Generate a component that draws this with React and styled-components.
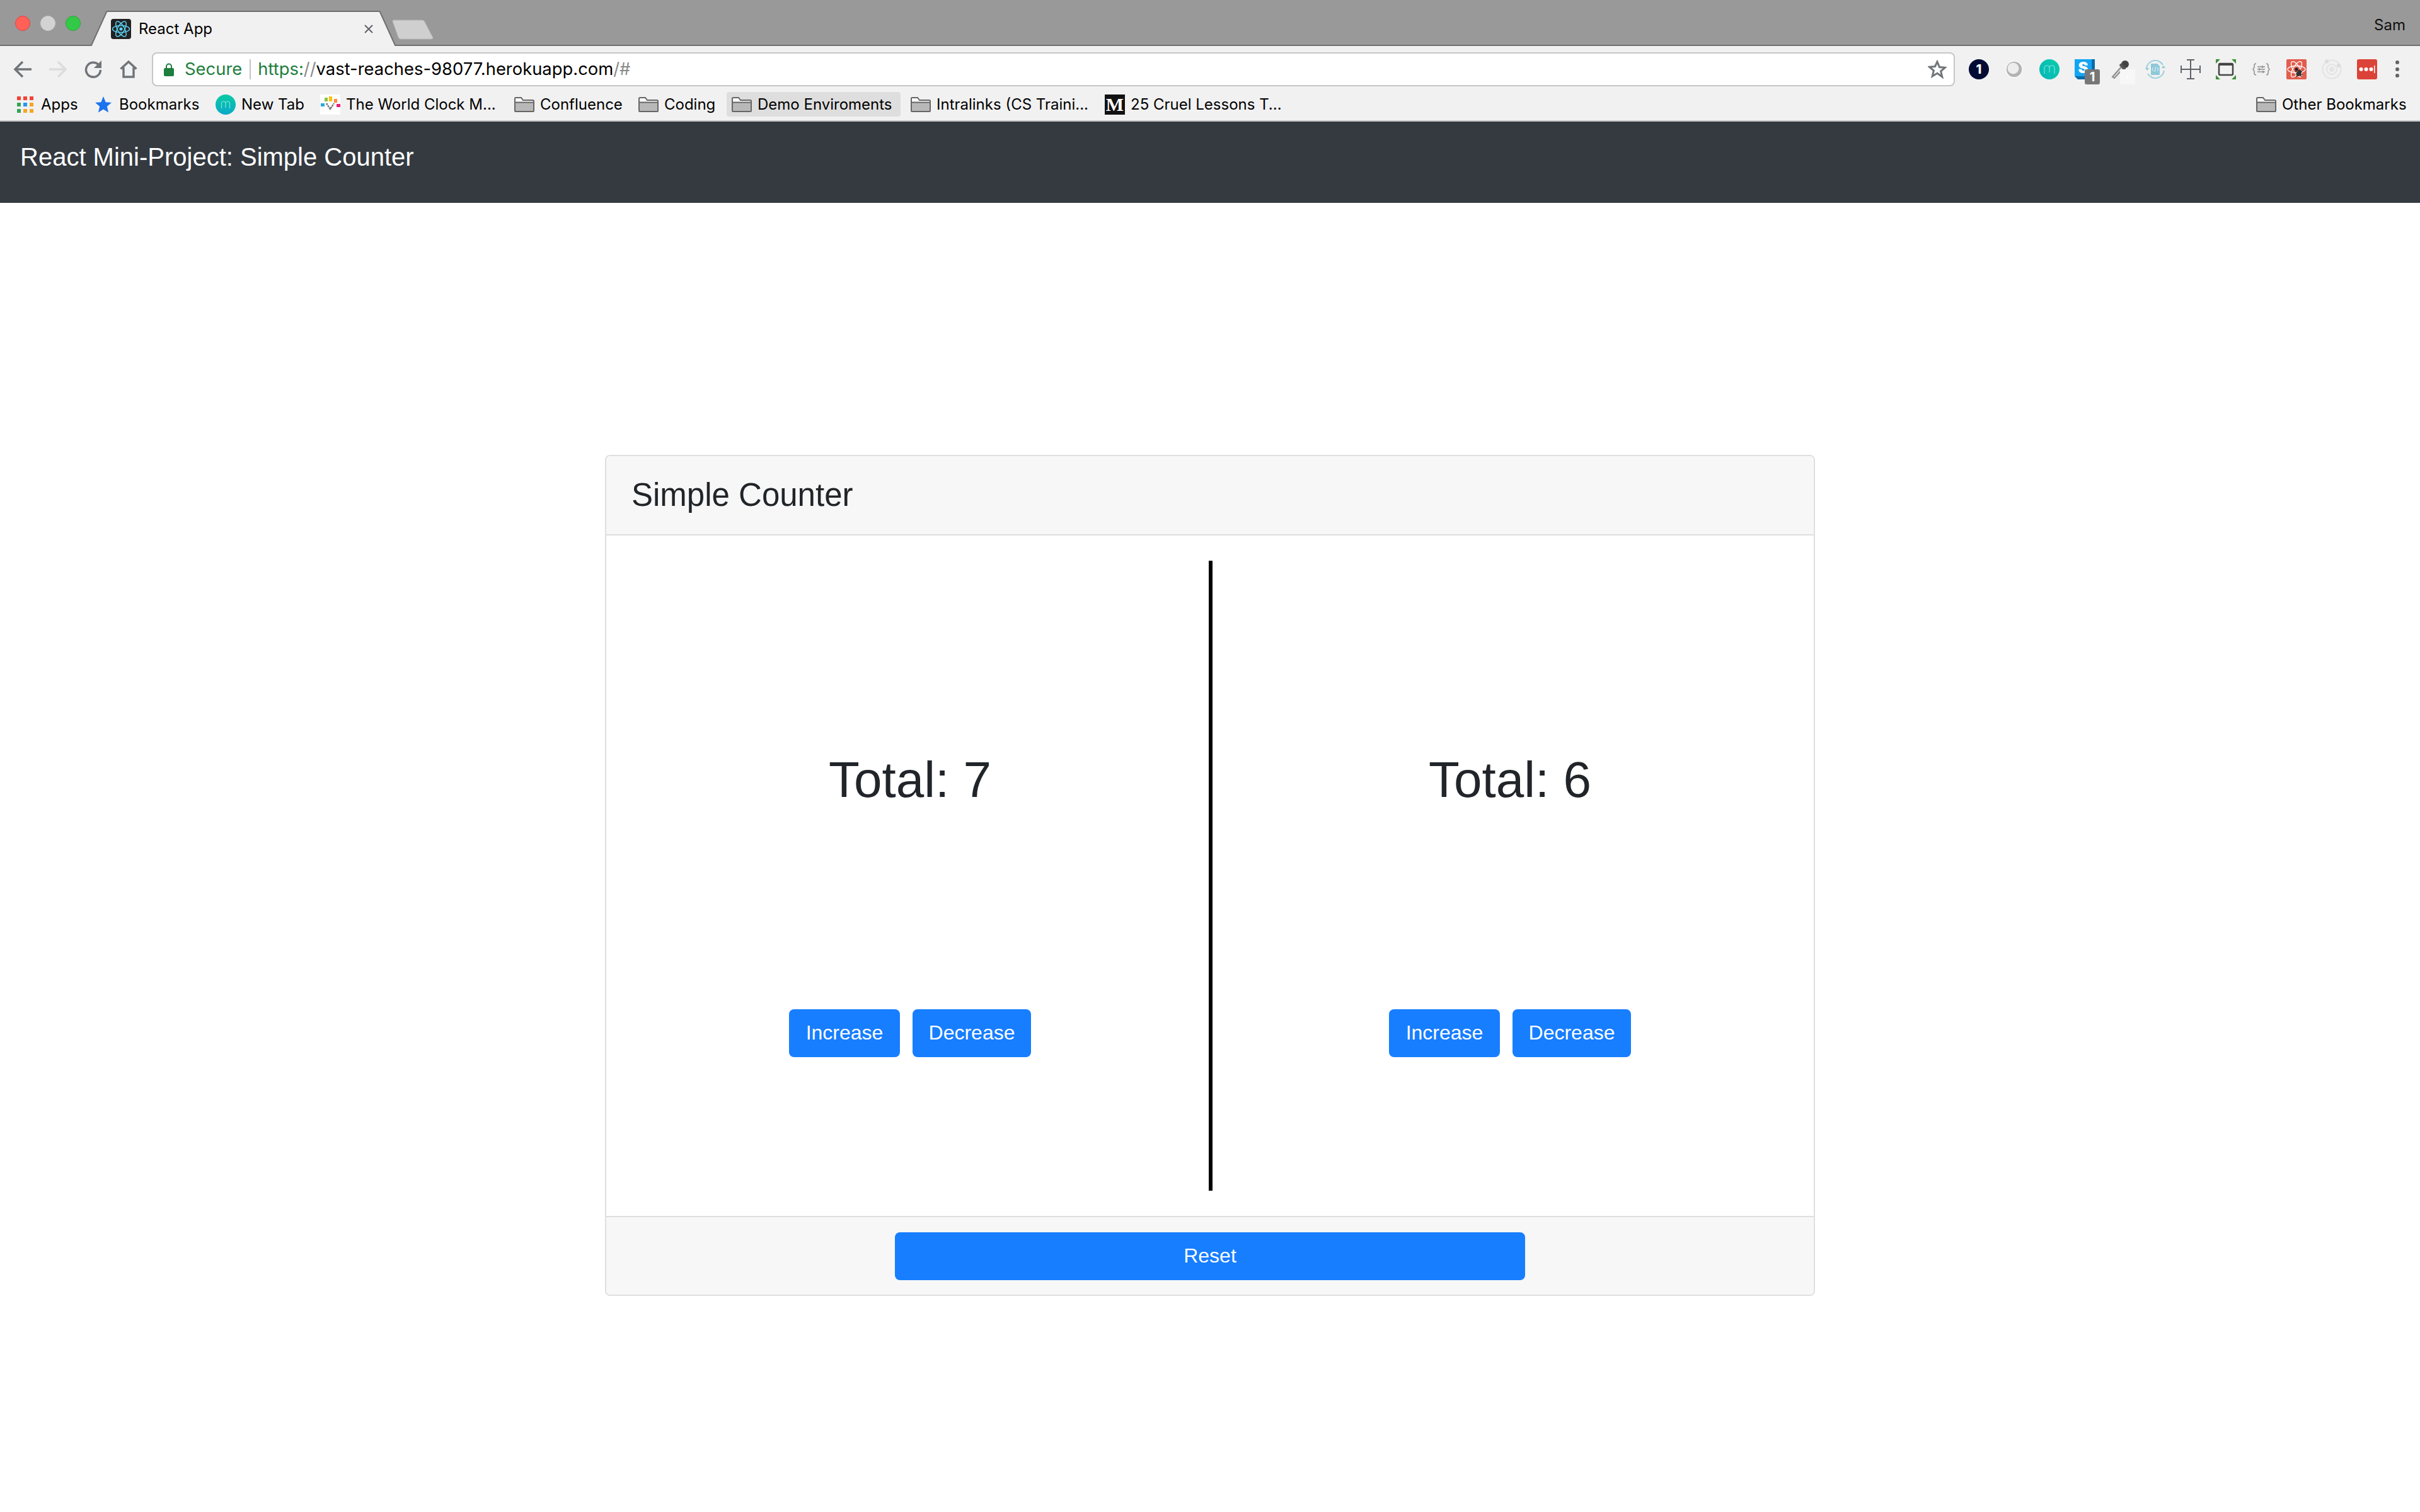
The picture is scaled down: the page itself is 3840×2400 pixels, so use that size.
import React from "react";
import styled, { createGlobalStyle } from "styled-components";

const GlobalStyle = createGlobalStyle`
  html, body {
    margin: 0;
    background: #fff;
  }
  * {
    box-sizing: border-box;
  }
`;

const chromeFont = `Inter, "Liberation Sans", sans-serif`;
const pageFont = `"Liberation Sans", Arial, sans-serif`;

const Page = styled.div`
  width: 3840px;
  height: 2400px;
  overflow: hidden;
  display: flex;
  flex-direction: column;
  background: #fff;
`;

/* ---- browser chrome ---- */

const TabStrip = styled.div`
  height: 73px;
  flex: none;
  display: flex;
  align-items: flex-end;
  padding-left: 24px;
  background: #999;
  border-bottom: 2px solid #6f6f6f;
`;

const Lights = styled.div`
  align-self: flex-start;
  margin-top: 25px;
  display: flex;
  gap: 16px;
`;

const Light = styled.span`
  width: 24px;
  height: 24px;
  border-radius: 50%;
  background: ${(p) => p.$color};
  border: 1px solid ${(p) => p.$edge};
`;

const Tab = styled.div`
  position: relative;
  width: 484px;
  height: 56px;
  margin-left: 16px;
  margin-bottom: -2px;
  padding: 13px 0 0 32px;
  display: flex;
  align-items: flex-start;
`;

const TabShape = styled.svg`
  position: absolute;
  left: 0;
  top: 0;
`;

const TabIcon = styled.svg`
  position: relative;
  flex: none;
  width: 32px;
  height: 32px;
`;

const TabTitle = styled.span`
  position: relative;
  margin-left: 12px;
  font: 400 24px/32px ${chromeFont};
  color: #000;
`;

const TabClose = styled.svg`
  position: absolute;
  left: 434px;
  top: 22px;
`;

const NewTab = styled.svg`
  flex: none;
  margin-left: -6px;
  margin-bottom: 8px;
`;

const Profile = styled.span`
  margin-left: auto;
  align-self: flex-start;
  margin-top: 24px;
  padding-right: 23px;
  font: 400 24px/32px ${chromeFont};
  color: #111;
`;

const Toolbar = styled.div`
  height: 64px;
  flex: none;
  display: flex;
  align-items: flex-start;
  padding: 10px 0 0 8px;
  background: #f1f1f1;
`;

const NavButton = styled.div`
  width: 56px;
  height: 54px;
  display: flex;
  align-items: center;
  justify-content: center;
`;

const AddressBar = styled.div`
  flex: none;
  width: 2861px;
  height: 54px;
  margin-left: 9px;
  padding: 0 11px 0 17px;
  display: flex;
  align-items: center;
  background: #fff;
  border: 2px solid #c6c6c6;
  border-radius: 8px;
`;

const Secure = styled.span`
  margin-left: 17px;
  font: 400 27.4px/1 ${chromeFont};
  color: #1e7e3e;
`;

const AddressDivider = styled.span`
  width: 2px;
  height: 32px;
  margin: 0 11px 0 12px;
  background: #c4c4c4;
`;

const Url = styled.span`
  font: 400 27.4px/1 ${chromeFont};
  color: #000;
`;

const UrlPart = styled.span`
  color: ${(p) => p.$color};
`;

const StarButton = styled.svg`
  margin-left: auto;
`;

const Extensions = styled.div`
  margin-left: 22px;
  height: 54px;
  display: flex;
  align-items: center;
  gap: 24px;
`;

const Extension = styled.div`
  position: relative;
  width: 32px;
  height: 32px;
  flex: none;
`;

const TileLetter = styled.span`
  position: absolute;
  left: 0;
  top: 0;
  width: 27px;
  height: 27px;
  color: #fff;
  text-align: center;
  font: 900 24px/27px ${chromeFont};
`;

const Badge = styled.span`
  position: absolute;
  left: 16px;
  top: 16px;
  width: 24px;
  height: 24px;
  border-radius: 3px;
  background: ${(p) => (p.$faded ? "#f7f7f7" : "#777")};
  color: #fff;
  font: 700 20px/24px ${chromeFont};
  text-align: center;
`;

const MenuDots = styled.svg`
  flex: none;
  margin-left: 5px;
`;

const BookmarksBar = styled.div`
  height: 56px;
  flex: none;
  display: flex;
  align-items: flex-start;
  gap: 8px;
  padding: 9px 8px 0 19px;
  background: #f1f1f1;
  border-bottom: 2px solid #c4c4c4;
`;

const Bookmark = styled.div`
  height: 39px;
  display: flex;
  align-items: center;
  gap: 9px;
  padding: 0 10px 0 8px;
  border-radius: 4px;
  background: ${(p) => (p.$active ? "#dedede" : "transparent")};
  ${(p) => p.$end && "margin-left: auto;"}
`;

const BookmarkLabel = styled.span`
  display: block;
  width: ${(p) => p.$w}px;
  white-space: nowrap;
  font: 400 24px/39px ${chromeFont};
  color: #000;
`;

const SmallBookmarkIcon = styled.svg`
  flex: none;
  margin-right: 3px;
`;

const MediumMark = styled.span`
  width: 32px;
  height: 32px;
  flex: none;
  background: #111;
  color: #fff;
  text-align: center;
  font: 700 30px/32px "Liberation Serif", serif;
`;

/* ---- page ---- */

const Navbar = styled.nav`
  height: 129px;
  flex: none;
  padding: 26px 32px;
  background: #343a40;
`;

const Brand = styled.div`
  font: 400 40px/60px ${pageFont};
  color: #fff;
`;

const Card = styled.section`
  width: 1920px;
  margin: 400px auto 0;
  border: 2px solid #dfdfdf;
  border-radius: 8px;
  overflow: hidden;
`;

const CardHeader = styled.header`
  height: 126px;
  padding: 26px 40px 22px;
  background: #f7f7f7;
  border-bottom: 2px solid #dfdfdf;
  font: 400 51px/72px ${pageFont};
  color: #212529;
`;

const CardBody = styled.div`
  padding: 40px 9px;
  display: flex;
  justify-content: center;
`;

const Counter = styled.div`
  width: 946px;
  height: 1000px;
  display: flex;
  flex-direction: column;
  align-items: center;
`;

const Total = styled.h2`
  margin: 300px 0 316px;
  font: 400 80px/96px ${pageFont};
  color: #212529;
`;

const Divider = styled.div`
  width: 6px;
  height: 1000px;
  flex: none;
  margin: 0 -1px 0 1px;
  background: #000;
`;

const ButtonRow = styled.div`
  display: flex;
  gap: 20px;
`;

const Button = styled.button`
  width: ${(p) => p.$w}px;
  height: 76px;
  padding: 0 0 2px;
  border: 0;
  border-radius: 8px;
  background: #177eff;
  color: #fff;
  font: 400 32px/48px ${pageFont};
`;

const CardFooter = styled.footer`
  height: 125px;
  padding-top: 24px;
  display: flex;
  justify-content: center;
  align-items: flex-start;
  background: #f7f7f7;
  border-top: 2px solid #dfdfdf;
`;

/* ---- drawings ---- */

const Folder = () => (
  <svg width="32" height="24" viewBox="0 0 32 24" style={{ flex: "none" }}>
    <path d="M1 22V2.5Q1 1 2.5 1H11l3 4h15.5Q31 5 31 6.5V22q0 1-1 1H2q-1 0-1-1z" fill="#fafafa" stroke="#666" strokeWidth="2" />
    <path d="M2 9h28v13H2z" fill="#b8b8b8" />
    <path d="M1 8.500h30" stroke="#666" strokeWidth="2" />
  </svg>
);

const AppsIcon = () => {
  const colors = ["#f44336", "#f44336", "#f44336", "#34a35c", "#2196f3", "#f5a623", "#34a35c", "#f5a623", "#f5a623"];
  return (
    <SmallBookmarkIcon width="26" height="26" viewBox="0 0 26 26">
      {colors.map((c, i) => (
        <rect key={i} x={(i % 3) * 10} y={Math.floor(i / 3) * 10} width="6" height="6" fill={c} />
      ))}
    </SmallBookmarkIcon>
  );
};

const BlueStar = () => (
  <SmallBookmarkIcon width="26" height="26" viewBox="0 0 26 26">
    <path d="M13 0l3.700 9.200 9.300.6-7.200 6.200 2.300 9.500L13 20.400l-8.100 5.100 2.300-9.500L0 9.800l9.300-.6z" fill="#1c73ee" />
  </SmallBookmarkIcon>
);

const MeldCircle = ({ id }) => (
  <svg width="32" height="32" viewBox="0 0 32 32" style={{ flex: "none" }}>
    <defs>
      <linearGradient id={id} x1="0" y1="0" x2="0" y2="1">
        <stop offset="0" stopColor="#08cba3" />
        <stop offset="1" stopColor="#0aa9c8" />
      </linearGradient>
    </defs>
    <circle cx="16" cy="16" r="16" fill={`url(#${id})`} />
    <path d="M9.500 22v-8q0-3 3.200-3t3.300 3v7M16 14q0-3 3.200-3t3.300 3v8" fill="none" stroke="#7fe3dc" strokeWidth="1.200" />
  </svg>
);

const WorldClockIcon = () => (
  <svg width="32" height="32" viewBox="0 0 32 32" style={{ flex: "none" }}>
    <rect width="32" height="32" fill="#fff" />
    <rect x="7" y="5" width="5" height="6" fill="#8bc34a" />
    <rect x="14" y="3" width="5" height="8" fill="#ffc107" />
    <rect x="22" y="7" width="5" height="6" fill="#ff8a3d" />
    <rect x="1" y="14" width="6" height="5" fill="#29a9e0" />
    <rect x="26" y="15" width="6" height="5" fill="#e91e78" />
    <path d="M10 14l6 9 6-9" fill="none" stroke="#777" strokeWidth="2.500" strokeDasharray="3 1" />
  </svg>
);

const ReactMark = () => (
  <TabIcon viewBox="0 0 32 32">
    <rect width="32" height="32" rx="4" fill="#222" />
    <g fill="none" stroke="#5bd0f2" strokeWidth="1.500">
      <ellipse cx="16" cy="16" rx="13.500" ry="5.500" />
      <ellipse cx="16" cy="16" rx="13.500" ry="5.500" transform="rotate(60 16 16)" />
      <ellipse cx="16" cy="16" rx="13.500" ry="5.500" transform="rotate(120 16 16)" />
    </g>
    <circle cx="16" cy="16" r="2.600" fill="#5bd0f2" />
  </TabIcon>
);

const navStroke = { fill: "none", strokeWidth: 3.500 };

const BackIcon = ({ color }) => (
  <svg width="28" height="28" viewBox="0 0 28 28">
    <path d="M14 2L2 14l12 12M2 14h26" stroke={color} {...navStroke} />
  </svg>
);

const ForwardIcon = ({ color }) => (
  <svg width="28" height="28" viewBox="0 0 28 28">
    <path d="M14 2l12 12-12 12M26 14H0" stroke={color} {...navStroke} />
  </svg>
);

const ReloadIcon = () => (
  <svg width="28" height="28" viewBox="0 0 28 28">
    <path d="M22.500 7A11.500 11.500 0 1 0 25.500 15" stroke="#70757a" {...navStroke} />
    <path d="M27 0v12H15z" fill="#70757a" />
  </svg>
);

const HomeIcon = () => (
  <svg width="28" height="28" viewBox="0 0 28 28">
    <path d="M1.500 13.500L14 2l12.500 11.500M6 11v15h16V11" stroke="#70757a" {...navStroke} />
  </svg>
);

const LockIcon = () => (
  <svg width="16" height="21" viewBox="0 0 16 21" style={{ flex: "none" }}>
    <path d="M4 9V5.500a4 4 0 0 1 8 0V9" fill="none" stroke="#1e7e3e" strokeWidth="2" />
    <rect y="8" width="16" height="13" rx="2" fill="#1e7e3e" />
  </svg>
);

const S32 = ({ children }) => (
  <svg width="32" height="32" viewBox="0 0 32 32">
    {children}
  </svg>
);

const ExtensionIcons = () => (
  <Extensions>
    <Extension>
      <S32>
        <circle cx="16" cy="16" r="16" fill="#020b33" />
        <text x="16" y="23" textAnchor="middle" fontFamily="Inter, sans-serif" fontWeight="800" fontSize="20" fill="#fff">1</text>
      </S32>
    </Extension>
    <Extension>
      <S32>
        <circle cx="16" cy="16" r="13" fill="#b3b3b3" stroke="#fafafa" strokeWidth="1.500" />
        <circle cx="14.500" cy="14.500" r="9" fill="#ededed" />
      </S32>
    </Extension>
    <Extension>
      <S32>
        <defs>
          <linearGradient id="extMeld" x1="0" y1="1" x2="1" y2="0">
            <stop offset="0" stopColor="#08b6ba" />
            <stop offset="1" stopColor="#08ccaa" />
          </linearGradient>
        </defs>
        <circle cx="16" cy="16" r="16" fill="url(#extMeld)" />
        <path d="M8 23v-9q0-4 4-4t4 4v7M16 14q0-4 4-4t4 4v9" fill="none" stroke="#7fe3dc" strokeWidth="1.200" />
      </S32>
    </Extension>
    <Extension>
      <S32>
        <path d="M26 0h6v26l-6 6H5l-5-5z" fill="#0b6aa8" />
        <rect width="27" height="27" fill="#12a5f4" />
      </S32>
      <TileLetter>S</TileLetter>
      <Badge>1</Badge>
    </Extension>
    <Extension>
      <S32>
        <path d="M4 28L18 12l3 3L7 30z" fill="#dadada" stroke="#8d8d8d" strokeWidth="2" />
        <circle cx="24" cy="8" r="6" fill="#444" />
        <path d="M16 8l8 8" stroke="#555" strokeWidth="4" />
      </S32>
      <Badge $faded>·</Badge>
    </Extension>
    <Extension>
      <S32>
        <path d="M2 14A14 14 0 0 1 28 9M30 18A14 14 0 0 1 4 23" fill="none" stroke="#9ed0dd" strokeWidth="2" />
        <path d="M0 14h6l-3 4zM26 14h6l-3-4z" fill="#8ec8d9" />
        <path d="M9 7h10l4 4v14H9z" fill="#8ec8d9" />
        <path d="M13 13l-2 3 2 3M19 13l2 3-2 3M17 12l-2 8" fill="none" stroke="#eef7fa" strokeWidth="1" />
      </S32>
    </Extension>
    <Extension>
      <S32>
        <path d="M1 10v12M1 16h30M31 10v12M10 1h12M16 1v30M10 31h12" fill="none" stroke="#5f6368" strokeWidth="2" />
      </S32>
    </Extension>
    <Extension>
      <S32>
        <path d="M0 0h7L0 7zM25 0h7v7zM0 25l7 7H0zM32 25v7h-7z" fill="#3f8f3a" />
        <rect x="5" y="7" width="22" height="18" rx="2" fill="none" stroke="#454545" strokeWidth="2.500" />
        <path d="M5 8h22" stroke="#454545" strokeWidth="4" />
      </S32>
    </Extension>
    <Extension>
      <S32>
        <path d="M8 7q-3 0-3 3v3l-2 3 2 3v3q0 3 3 3M24 7q3 0 3 3v3l2 3-2 3v3q0 3-3 3" fill="none" stroke="#8f8f8f" strokeWidth="1.500" />
        <path d="M10 12h12M10 16h12M10 20h12" stroke="#8f8f8f" strokeWidth="1.500" />
        <path d="M18 10v4M13 14v4M19 18v4" stroke="#8f8f8f" strokeWidth="1.500" />
      </S32>
    </Extension>
    <Extension>
      <S32>
        <rect width="32" height="32" rx="2" fill="#e35d4d" />
        <g fill="none" stroke="#fff" strokeWidth="1.300">
          <ellipse cx="16" cy="16" rx="14" ry="5.500" />
          <ellipse cx="16" cy="16" rx="14" ry="5.500" transform="rotate(60 16 16)" />
          <ellipse cx="16" cy="16" rx="14" ry="5.500" transform="rotate(120 16 16)" />
        </g>
        <circle cx="16" cy="16" r="2.500" fill="#222" />
        <ellipse cx="20" cy="22" rx="3.500" ry="5.500" fill="#333" transform="rotate(30 20 22)" />
        <path d="M14 19l12 6M15 24l10-5M18 16l6 12M22 16l-6 12" stroke="#333" strokeWidth="1.200" />
      </S32>
    </Extension>
    <Extension>
      <S32>
        <circle cx="16" cy="16" r="14.500" fill="none" stroke="#e3e3e3" strokeWidth="2" />
        <circle cx="16" cy="16" r="8" fill="none" stroke="#e3e3e3" strokeWidth="2" />
        <circle cx="16" cy="16" r="4" fill="#e3e3e3" />
        <circle cx="8" cy="3.500" r="3" fill="#dcdcdc" />
        <circle cx="27" cy="10" r="3" fill="#dcdcdc" />
      </S32>
    </Extension>
    <Extension>
      <S32>
        <rect width="32" height="32" rx="3" fill="#dc4338" />
        <circle cx="6.500" cy="16" r="3" fill="#fff" />
        <circle cx="14.500" cy="16" r="3" fill="#fff" />
        <circle cx="22.500" cy="16" r="3" fill="#fff" />
        <rect x="27" y="10" width="1.500" height="12" fill="#fff" />
      </S32>
    </Extension>
    <MenuDots width="6" height="28" viewBox="0 0 6 28">
      <circle cx="3" cy="3" r="3" fill="#5f6368" />
      <circle cx="3" cy="14" r="3" fill="#5f6368" />
      <circle cx="3" cy="24" r="3" fill="#5f6368" />
    </MenuDots>
  </Extensions>
);

const CounterPanel = ({ total }) => (
  <Counter>
    <Total>Total: {total}</Total>
    <ButtonRow>
      <Button $w={176}>Increase</Button>
      <Button $w={188}>Decrease</Button>
    </ButtonRow>
  </Counter>
);

export default function App() {
  return (
    <Page>
      <GlobalStyle />
      <TabStrip>
        <Lights>
          <Light $color="#ff6058" $edge="#e0443e" />
          <Light $color="#d3d3d3" $edge="#cfcfcf" />
          <Light $color="#33c948" $edge="#27aa35" />
        </Lights>
        <Tab>
          <TabShape width="484" height="56" viewBox="0 0 484 56">
            <path d="M0.500 56L25 2Q25.700 1 27 1H457Q458.300 1 459 2L483.500 56" fill="#f1f1f1" stroke="#6f6f6f" strokeWidth="2" />
          </TabShape>
          <ReactMark />
          <TabTitle>React App</TabTitle>
          <TabClose width="14" height="14" viewBox="0 0 14 14">
            <path d="M1 1l12 12M13 1L1 13" stroke="#5f6368" strokeWidth="2" />
          </TabClose>
        </Tab>
        <NewTab width="66" height="32" viewBox="0 0 66 32">
          <path d="M2 1h46q3 0 4 3l13 25q0 2-3 2H14q-3 0-4-3L1 3q0-2 1-2z" fill="#cfcfcf" stroke="#b5b5b5" strokeWidth="1" />
        </NewTab>
        <Profile>Sam</Profile>
      </TabStrip>
      <Toolbar>
        <NavButton><BackIcon color="#70757a" /></NavButton>
        <NavButton><ForwardIcon color="#dcdcdc" /></NavButton>
        <NavButton><ReloadIcon /></NavButton>
        <NavButton><HomeIcon /></NavButton>
        <AddressBar>
          <LockIcon />
          <Secure>Secure</Secure>
          <AddressDivider />
          <Url>
            <UrlPart $color="#1e7e3e">https:</UrlPart>
            <UrlPart $color="#8a8a8a">//</UrlPart>
            vast-reaches-98077.herokuapp.com
            <UrlPart $color="#8a8a8a">/#</UrlPart>
          </Url>
          <StarButton width="30" height="30" viewBox="0 0 30 30">
            <path d="M15 3l3.500 8.500 9 .7-6.900 5.900 2.200 8.900L15 21.300l-7.800 4.700 2.200-8.900-6.900-5.900 9-.7z" fill="none" stroke="#70757a" strokeWidth="3" />
          </StarButton>
        </AddressBar>
        <ExtensionIcons />
      </Toolbar>
      <BookmarksBar>
        <Bookmark><AppsIcon /><BookmarkLabel $w={60}>Apps</BookmarkLabel></Bookmark>
        <Bookmark><BlueStar /><BookmarkLabel $w={127}>Bookmarks</BookmarkLabel></Bookmark>
        <Bookmark><MeldCircle id="tabMeld" /><BookmarkLabel $w={99}>New Tab</BookmarkLabel></Bookmark>
        <Bookmark><WorldClockIcon /><BookmarkLabel $w={241}>The World Clock M...</BookmarkLabel></Bookmark>
        <Bookmark><Folder /><BookmarkLabel $w={130}>Confluence</BookmarkLabel></Bookmark>
        <Bookmark><Folder /><BookmarkLabel $w={81}>Coding</BookmarkLabel></Bookmark>
        <Bookmark $active><Folder /><BookmarkLabel $w={217}>Demo Enviroments</BookmarkLabel></Bookmark>
        <Bookmark><Folder /><BookmarkLabel $w={241}>Intralinks (CS Traini...</BookmarkLabel></Bookmark>
        <Bookmark><MediumMark>M</MediumMark><BookmarkLabel $w={236}>25 Cruel Lessons T...</BookmarkLabel></Bookmark>
        <Bookmark $end><Folder /><BookmarkLabel $w={201}>Other Bookmarks</BookmarkLabel></Bookmark>
      </BookmarksBar>
      <Navbar>
        <Brand>React Mini-Project: Simple Counter</Brand>
      </Navbar>
      <Card>
        <CardHeader>Simple Counter</CardHeader>
        <CardBody>
          <CounterPanel total={7} />
          <Divider />
          <CounterPanel total={6} />
        </CardBody>
        <CardFooter>
          <Button $w={1000}>Reset</Button>
        </CardFooter>
      </Card>
    </Page>
  );
}
